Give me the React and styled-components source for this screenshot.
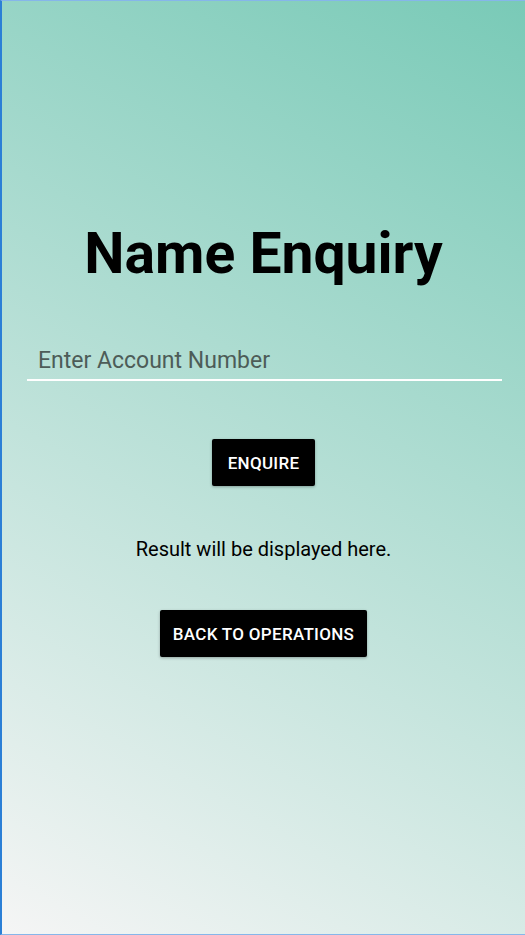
import React from "react";
import styled, { createGlobalStyle } from "styled-components";

const Global = createGlobalStyle`
  html, body { margin: 0; padding: 0; height: 100%; }
  body { font-family: Roboto, "Noto Sans", sans-serif; }
  #root { height: 100%; }
`;

const Screen = styled.div`
  box-sizing: border-box;
  width: 525px;
  height: 935px;
  border-left: 2px solid #2b7fd6;
  border-top: 1px solid #86b6ea;
  border-bottom: 1px solid #86b6ea;
  background: linear-gradient(29.3deg, #f5f5f5 0%, #79cab7 100%);
  display: flex;
  flex-direction: column;
  align-items: center;
  padding-top: 216px;
`;

const Title = styled.h1`
  margin: 0;
  font-family: Roboto, sans-serif;
  font-weight: 700;
  font-size: 57px;
  line-height: 74px;
  color: #000;
`;

const Field = styled.div`
  align-self: stretch;
  margin: 56px 23px 0 25px;
  border-bottom: 2px solid #ffffff;
  padding: 0 0 4px 11px;
`;

const Input = styled.input`
  width: 100%;
  border: none;
  background: transparent;
  outline: none;
  font-family: Roboto, sans-serif;
  font-size: 23px;
  line-height: 28px;
  padding: 0;
  color: #000;
  &::placeholder { color: #4d5c58; }
`;

const Button = styled.button`
  margin-top: ${(p) => p.$top}px;
  height: 47px;
  padding: 0 ${(p) => p.$pad}px;
  background: #000;
  color: #fff;
  border: none;
  border-radius: 2px;
  font-family: Roboto, sans-serif;
  font-weight: 500;
  font-size: 17px;
  letter-spacing: 0.3px;
  box-shadow: 0 1px 3px rgba(0, 0, 0, 0.3);
`;

const Result = styled.p`
  margin: 51px 0 0;
  font-family: Roboto, sans-serif;
  font-size: 20px;
  line-height: 24px;
  color: #000;
`;

export default function App() {
  return (
    <>
      <Global />
      <Screen>
        <Title>Name Enquiry</Title>
        <Field>
          <Input placeholder="Enter Account Number" />
        </Field>
        <Button $top={58} $pad={16}>ENQUIRE</Button>
        <Result>Result will be displayed here.</Result>
        <Button $top={49} $pad={13}>BACK TO OPERATIONS</Button>
      </Screen>
    </>
  );
}
